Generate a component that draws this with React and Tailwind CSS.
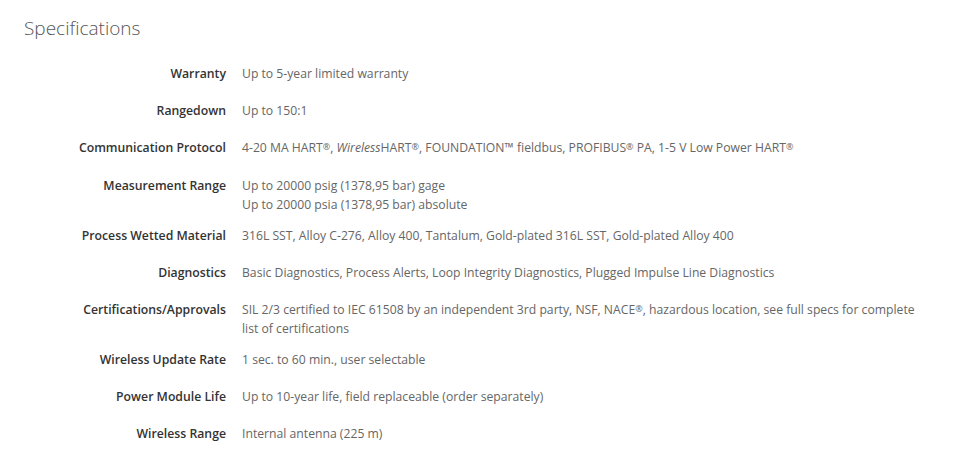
import React from 'react';

const R = () => <sup className="text-[9px] relative -top-[2px]">®</sup>;

const specs = [
  { label: 'Warranty', value: 'Up to 5-year limited warranty' },
  { label: 'Rangedown', value: 'Up to 150:1' },
  {
    label: 'Communication Protocol',
    value: (
      <>
        4-20 MA HART<R />, <em>Wireless</em>HART<R />, FOUNDATION™ fieldbus, PROFIBUS<R /> PA, 1-5 V Low Power HART<R />
      </>
    ),
  },
  {
    label: 'Measurement Range',
    value: (
      <>
        Up to 20000 psig (1378,95 bar) gage
        <br />
        Up to 20000 psia (1378,95 bar) absolute
      </>
    ),
  },
  {
    label: 'Process Wetted Material',
    value: '316L SST, Alloy C-276, Alloy 400, Tantalum, Gold-plated 316L SST, Gold-plated Alloy 400',
  },
  {
    label: 'Diagnostics',
    value: 'Basic Diagnostics, Process Alerts, Loop Integrity Diagnostics, Plugged Impulse Line Diagnostics',
  },
  {
    label: 'Certifications/Approvals',
    value: (
      <>
        SIL 2/3 certified to IEC 61508 by an independent 3rd party, NSF, NACE<R />, hazardous location, see full specs for complete list of certifications
      </>
    ),
  },
  { label: 'Wireless Update Rate', value: '1 sec. to 60 min., user selectable' },
  { label: 'Power Module Life', value: 'Up to 10-year life, field replaceable (order separately)' },
  { label: 'Wireless Range', value: 'Internal antenna (225 m)' },
];

export default function App() {
  return (
    <div className="bg-white w-[960px] h-[468px] overflow-hidden px-6 pt-[14px]" style={{ fontFamily: '"Open Sans", Arial, sans-serif' }}>
      <h2 className="text-[19px] font-light leading-[28px] text-[#555]">Specifications</h2>
      <div className="mt-[13px]">
        {specs.map((s) => (
          <div key={s.label} className="flex items-start pt-[9px] pb-[3px] min-h-[37.2px] leading-[19px]">
            <div className="w-[202px] shrink-0 text-right text-[12.25px] font-semibold text-[#333]">{s.label}</div>
            <div className="ml-4 w-[678px] text-[12.2px] text-[#666]">{s.value}</div>
          </div>
        ))}
      </div>
    </div>
  );
}
